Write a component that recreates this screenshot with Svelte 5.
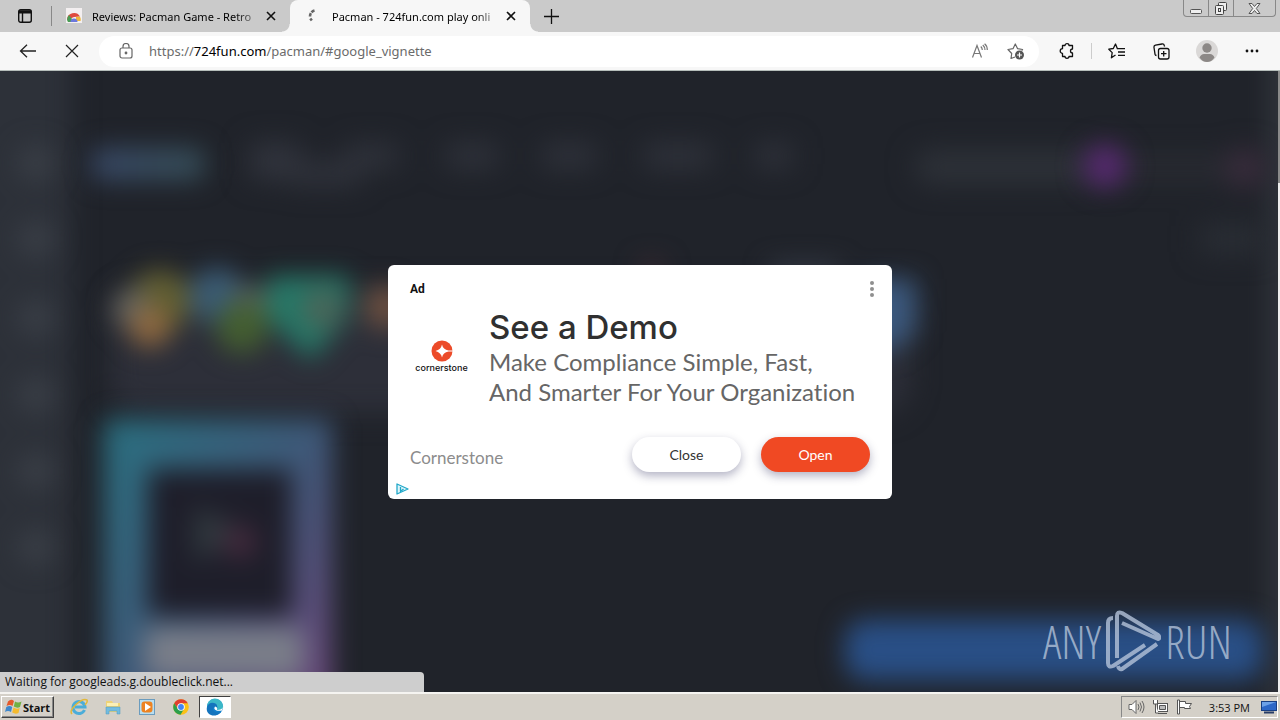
<script>
  let url = 'https://724fun.com/pacman/#google_vignette';
  let address = { scheme: 'https://', host: '724fun.com', path: '/pacman/#google_vignette' };

  const navItems = [
    { x: 250, y: 72, w: 50, h: 36 },
    { x: 290, y: 92, w: 70, h: 22 },
    { x: 346, y: 74, w: 52, h: 22 },
    { x: 446, y: 74, w: 52, h: 22 },
    { x: 542, y: 74, w: 54, h: 22 },
    { x: 644, y: 74, w: 68, h: 22 },
    { x: 756, y: 74, w: 36, h: 22 }
  ];
  const sidebarItems = [92, 168, 247, 324, 400, 476];
</script>

<div class="desktop">
  <header class="tabstrip">
    <button class="tab-menu" aria-label="Tab actions">
      <svg width="16" height="16" viewBox="0 0 16 16" fill="none" stroke="#111" stroke-width="1.4">
        <rect x="1.7" y="1.7" width="12.6" height="12.6" rx="2" />
        <path d="M2 3.2h12M2 4.4h12" stroke-width="2" />
        <path d="M5.5 5v9" />
      </svg>
    </button>
    <div class="tab">
      <svg class="favicon" width="16" height="16" viewBox="0 0 16 16">
        <path d="M0 0h16v15H0z" fill="#f3eff0" />
        <path d="M1 12a7 7 0 0 1 13-3.500L8 9z" fill="#df4b3e" />
        <path d="M1 12a7 7 0 0 1 2-5l3 4-1 3H2z" fill="#4a9c54" />
        <path d="M14 8.500a7 7 0 0 1 .6 4.500H10V9z" fill="#efb73b" />
        <path d="M4.500 14a3.500 3.500 0 0 1 7 0z" fill="#6c78dc" />
      </svg>
      <span class="tab-title">Reviews: Pacman Game - Retro</span>
      <button class="tab-close" aria-label="Close tab">
        <svg width="10" height="10" viewBox="0 0 10 10" stroke="#111" stroke-width="1.6"><path d="M1 1l8 8M9 1l-8 8" /></svg>
      </button>
    </div>
    <div class="tab active">
      <svg class="favicon" width="16" height="16" viewBox="0 0 16 16" fill="none" stroke="#666" stroke-width="2.600">
        <path d="M8.500 2.500a6 6 0 0 0-4.500 6" stroke-dasharray="3.500 1" />
        <path d="M4.300 10.500l1.500 2" />
      </svg>
      <span class="tab-title">Pacman - 724fun.com play onli</span>
      <button class="tab-close" aria-label="Close tab">
        <svg width="10" height="10" viewBox="0 0 10 10" stroke="#111" stroke-width="1.6"><path d="M1 1l8 8M9 1l-8 8" /></svg>
      </button>
    </div>
    <button class="new-tab" aria-label="New tab">
      <svg width="15" height="15" viewBox="0 0 15 15" stroke="#111" stroke-width="1.300"><path d="M7.500 0v15M0 7.500h15" /></svg>
    </button>
    <div class="window-controls">
      <button class="win" aria-label="Minimize">
        <svg width="12" height="13" viewBox="0 0 12 13"><rect x=".5" y="7.500" width="11" height="4" rx="1" fill="#eee" stroke="#555" /></svg>
      </button>
      <button class="win" aria-label="Restore">
        <svg width="14" height="13" viewBox="0 0 14 13" fill="#eee" stroke="#444">
          <rect x="4.500" y=".5" width="8" height="8" rx="1" />
          <rect x="1.500" y="3.500" width="8" height="9" rx="1" />
          <rect x="4.500" y="6.500" width="2" height="3" />
        </svg>
      </button>
      <button class="win wide" aria-label="Close window">
        <svg width="13" height="11" viewBox="0 0 13 11">
          <path d="M1 .5h3l2.500 3 2.500-3h3L8.300 5.500l3.700 5H9L6.500 7.500 4 10.500H1l3.700-5z" fill="#eee" stroke="#555" />
        </svg>
      </button>
    </div>
  </header>

  <nav class="toolbar">
    <button class="tool" aria-label="Back">
      <svg width="18" height="14" viewBox="0 0 18 14" fill="none" stroke="#222" stroke-width="1.300"><path d="M17 7H1.500M8 .8L1.500 7 8 13.200" /></svg>
    </button>
    <button class="tool" aria-label="Stop loading">
      <svg width="14" height="14" viewBox="0 0 14 14" stroke="#222" stroke-width="1.200"><path d="M1 1l12 12M13 1L1 13" /></svg>
    </button>
    <div class="omnibox">
      <svg class="lock" width="14" height="16" viewBox="0 0 14 16" fill="none" stroke="#666" stroke-width="1.200">
        <rect x="1" y="5" width="12" height="10" rx="2" />
        <path d="M4 5V3.500a3 3 0 0 1 6 0V5" />
        <circle cx="7" cy="10" r=".8" fill="#555" />
      </svg>
      <a class="address" href={url}>{address.scheme}<b>{address.host}</b>{address.path}</a>
      <button class="inner" aria-label="Read aloud">
        <svg width="18" height="16" viewBox="0 0 18 16" fill="none" stroke="#777" stroke-width="1.200">
          <path d="M1.500 14.500L6 2.500l4.500 12M3 10.500h6" />
          <path d="M9.800 3.500q1.500 1.500 1.500 3.500M11.800 2q2.200 2 2.200 5M13.600.800Q16.300 3 16.300 7" />
        </svg>
      </button>
      <button class="inner" aria-label="Add to favorites">
        <svg width="18" height="18" viewBox="0 0 18 18" fill="none" stroke="#666" stroke-width="1.200">
          <path d="M8 15l-4 1.500.7-5L1 7.500l5-.8L8.300 2l2.300 4.700 5 .8-1 1" stroke-linejoin="round" />
          <circle cx="12.500" cy="13" r="4.500" fill="#555" stroke="none" />
          <path d="M12.500 10.500v5M10 13h5" stroke="#fff" />
        </svg>
      </button>
    </div>
    <div class="extras">
      <button class="tool" aria-label="Extensions">
        <svg width="16" height="16" viewBox="0 0 16 16" fill="none" stroke="#111" stroke-width="1.300" stroke-linejoin="round">
          <path d="M3.500 2.500H6a2 1.800 0 0 1 4 0h3.500V6a1.500 1.500 0 0 0 0 4v3.500H10a2 1.800 0 0 1-4 0H3.500V10.300a2.300 2.300 0 0 1 0-4.600z" />
        </svg>
      </button>
      <span class="divider"></span>
      <button class="tool" aria-label="Favorites">
        <svg width="18" height="16" viewBox="0 0 18 16" fill="none" stroke="#111" stroke-width="1.300" stroke-linejoin="round">
          <path d="M9.500 6L7.500 1 5.300 5.500.8 6.200l3.400 3.400-.8 5.200L7.500 12" />
          <path d="M9 5.700h8M10 9h7M10 12.300h7" />
        </svg>
      </button>
      <button class="tool" aria-label="Collections">
        <svg width="17" height="17" viewBox="0 0 17 17" fill="none" stroke="#111" stroke-width="1.300">
          <rect x="5.500" y="5.500" width="10.500" height="10.500" rx="2" />
          <path d="M3.500 12.500a2 2 0 0 1-1.500-1.300L1 4.500a2 2 0 0 1 1.500-2.300L9 1a2 2 0 0 1 2.300 1.500l.3 1M10.700 8v5.500M8 10.700h5.500" />
        </svg>
      </button>
      <button class="tool" aria-label="Profile">
        <svg width="22" height="22" viewBox="0 0 22 22">
          <circle cx="11" cy="11" r="11" fill="#dad8d7" />
          <circle cx="11" cy="8" r="4.700" fill="#8c8886" />
          <path d="M3.500 17.500Q5 14 8 14h6q3 0 4.500 3.500Q15.500 22 11 22t-7.500-4.500z" fill="#8c8886" />
        </svg>
      </button>
      <button class="tool" aria-label="Settings and more">
        <svg width="14" height="4" viewBox="0 0 14 4" fill="#111"><circle cx="2" cy="2" r="1.400" /><circle cx="7" cy="2" r="1.400" /><circle cx="12" cy="2" r="1.400" /></svg>
      </button>
    </div>
  </nav>

  <main class="page">
    <svg class="backdrop" viewBox="0 0 1280 621" preserveAspectRatio="xMinYMin slice" aria-hidden="true">
      <defs>
        <filter id="soft" x="-50%" y="-50%" width="200%" height="200%" color-interpolation-filters="sRGB"><feGaussianBlur stdDeviation="14" /></filter>
        <filter id="edge" x="-50%" y="-50%" width="200%" height="200%" color-interpolation-filters="sRGB"><feGaussianBlur stdDeviation="13" /></filter>
        <linearGradient id="frame" x1="0" y1="0" x2="1" y2="1">
          <stop offset="0" stop-color="#297080" />
          <stop offset=".5" stop-color="#3f5878" />
          <stop offset="1" stop-color="#70457a" />
        </linearGradient>
        <linearGradient id="logo"><stop offset="0" stop-color="#384866" /><stop offset="1" stop-color="#364e58" /></linearGradient>
      </defs>
      <rect width="1280" height="621" fill="#20232a" />
      <rect x="-30" y="-30" width="102" height="690" fill="#2d3139" filter="url(#edge)" />
      <rect x="1268" y="-30" width="40" height="690" fill="#30343b" filter="url(#edge)" />
      <g filter="url(#soft)">
        {#each sidebarItems as y}
          <circle cx="36" cy={y} r="16" fill="#3e434b" />
        {/each}
        {#each navItems as item}
          <rect x={item.x} y={item.y} width={item.w} height={item.h} fill="#31343d" />
        {/each}
        <rect x="915" y="80" width="180" height="32" rx="14" fill="#2e3239" />
        <rect x="1095" y="86" width="150" height="22" fill="#2a2c33" />
        <circle cx="1246" cy="97" r="19" fill="#3c2d3e" />
        <rect x="1200" y="154" width="64" height="28" fill="#2a2e35" />
        <rect x="110" y="218" width="800" height="124" rx="30" fill="#2d2f39" />
      </g>
      <g filter="url(#edge)">
        <rect x="92" y="77" width="112" height="32" rx="8" fill="url(#logo)" />
        <circle cx="1105" cy="95" r="22" fill="#56296f" />
        <circle cx="160" cy="230" r="31" fill="#615e30" />
        <circle cx="133" cy="238" r="20" fill="#65655e" />
        <circle cx="150" cy="256" r="20" fill="#926a40" />
        <circle cx="217" cy="225" r="28" fill="#3a5b74" />
        <circle cx="250" cy="235" r="20" fill="#58655a" />
        <circle cx="242" cy="256" r="26" fill="#445f30" />
        <path d="M267 205h82v40l-38 44-42-40z" fill="#257867" />
        <circle cx="322" cy="238" r="20" fill="#4c6458" />
        <circle cx="386" cy="236" r="22" fill="#6d5040" />
        <rect x="640" y="192" width="24" height="10" fill="#4d3035" />
        <rect x="770" y="194" width="70" height="14" fill="#3c424e" />
        <path d="M862 208h54v52l-24 20h-30z" fill="#3b597e" />
      </g>
      <g filter="url(#edge)">
        <rect x="104" y="348" width="228" height="304" rx="8" fill="url(#frame)" />
        <rect x="148" y="398" width="144" height="147" rx="4" fill="#1e1e2a" />
        <path d="M194 435l55 25-55 32z" fill="#30383e" />
        <circle cx="240" cy="471" r="17" fill="#43293c" />
        <rect x="145" y="557" width="158" height="50" rx="8" fill="#7a7e89" />
      </g>
      <rect x="845" y="549" width="418" height="60" rx="20" fill="#294f86" filter="url(#edge)" />
    </svg>

    <section class="ad" aria-label="Advertisement">
      <div class="ad-head">
        <strong>Ad</strong>
        <button class="more" aria-label="Ad options">
          <svg width="4" height="16" viewBox="0 0 4 16" fill="#8f8f8f"><circle cx="2" cy="2" r="2" /><circle cx="2" cy="8" r="2" /><circle cx="2" cy="14" r="2" /></svg>
        </button>
      </div>
      <div class="ad-body">
        <div class="brand">
          <svg width="22" height="22" viewBox="0 0 22 22">
            <circle cx="11" cy="11" r="10.500" fill="#ec4b29" />
            <path d="M11 4.500q1 5 6.500 6H22v1h-4.500q-5.500 1-6.500 6-1-5-6.500-6.500 5.500-1.500 6.500-6.500z" fill="#fff" />
          </svg>
          <span>cornerstone</span>
        </div>
        <div class="copy">
          <h1>See a Demo</h1>
          <p>Make Compliance Simple, Fast,<br />And Smarter For Your Organization</p>
        </div>
      </div>
      <div class="ad-foot">
        <span class="advertiser">Cornerstone</span>
        <button class="pill">Close</button>
        <button class="pill open">Open</button>
      </div>
      <a class="adchoices" href="#adchoices" aria-label="AdChoices">
        <svg width="13" height="12" viewBox="0 0 13 12" fill="none" stroke="#21a8c9" stroke-width="1.300" stroke-linejoin="round">
          <path d="M1 1l11 5L1 11z" fill="#dff5fa" />
          <path d="M4.500 4v4.500l3-2.500" />
        </svg>
      </a>
    </section>

    <div class="watermark">
      <span>ANY</span>
      <svg width="56" height="62" viewBox="0 0 56 62" fill="none" stroke="currentColor" stroke-width="4" stroke-linejoin="round">
        <path d="M8 8Q3 8 3 13v40q0 5 5 3l32-21" />
        <path d="M12 48V6q0-5 5-3l36 22q3 3 0 4L17 13" />
        <path d="M52 34L17 59q-3 1-4-3" />
      </svg>
      <span>RUN</span>
    </div>

    <div class="status">Waiting for googleads.g.doubleclick.net...</div>
    <div class="scroll"><div class="thumb"></div></div>
  </main>

  <footer class="taskbar">
    <button class="start">
      <svg width="17" height="16" viewBox="0 0 17 16">
        <path d="M3 2.500Q6-.5 9 2L7.500 7Q5 5 1.500 7z" fill="#e4592b" />
        <path d="M10 2.500q3 2 6.500 0L15 8q-3 1.500-6.200-.5z" fill="#71b043" />
        <path d="M1.300 8Q4.500 6.200 7.200 8L6 13q-3-2-6 0z" fill="#3d87cc" />
        <path d="M8.500 8.500q3 2 6.200.5L13.500 14q-3 1.500-6.300-.5z" fill="#f5bb2f" />
      </svg>
      Start
    </button>
    <button class="launch" aria-label="Internet Explorer">
      <svg width="18" height="18" viewBox="0 0 18 18" fill="none">
        <path d="M14.500 12a6 6 0 1 1 .5-3H5" stroke="#4badd9" stroke-width="3" />
        <path d="M2 16Q-1 13 6 6.500T17 2q1 2-2 5" stroke="#e2b83a" stroke-width="1.500" />
      </svg>
    </button>
    <button class="launch" aria-label="Windows Explorer">
      <svg width="18" height="18" viewBox="0 0 18 18">
        <path d="M2 3h6l1 2h7v9H2z" fill="#eed377" />
        <path d="M3 5h11v3H3z" fill="#fbf0b5" />
        <path d="M2 9h14v7h-3v-3H5v3H2z" fill="#73bce0" stroke="#4d98bd" stroke-width=".5" />
      </svg>
    </button>
    <button class="launch" aria-label="Media Player">
      <svg width="18" height="18" viewBox="0 0 18 18">
        <rect x="1.500" y="1.500" width="15" height="15" fill="#b9def0" stroke="#6b9cbe" />
        <rect x="3.500" y="3.500" width="11" height="11" rx="3" fill="#ed8322" />
        <path d="M7 5l6 4-6 4z" fill="#fff" />
      </svg>
    </button>
    <button class="launch" aria-label="Chrome">
      <svg width="16" height="16" viewBox="0 0 16 16">
        <circle cx="8" cy="8" r="7.800" fill="#fbc116" />
        <path d="M1.200 4.200A7.800 7.800 0 0 1 14.800 4.200H8L5 10z" fill="#df3f31" />
        <path d="M1.200 4.200A7.800 7.800 0 0 0 7.500 15.800L11 10H5z" fill="#2c9f4b" />
        <circle cx="8" cy="8" r="3.800" fill="#fff" /><circle cx="8" cy="8" r="2.900" fill="#4285f4" />
      </svg>
    </button>
    <button class="launch current" aria-label="Edge">
      <svg width="18" height="18" viewBox="0 0 18 18">
        <circle cx="9" cy="9" r="8" fill="#1280cc" />
        <path d="M1 9a8 8 0 0 1 16-1c1 4-4 5-6 4 1-3 0-6-4-6-3 0-5 1-6 3z" fill="#3bb8c8" />
        <path d="M1 9q2-5 7-4 4 1 3 5-1-2-3-1c-3 2 0 7 7 5-6 7-16 3-14-5z" fill="#1474bd" />
        <path d="M9 8.500c-2 3 1 5 7 4L17 9q-1 3-6 3 1-3-2-3.500z" fill="#fff" />
      </svg>
    </button>
    <div class="tray">
      <button aria-label="Volume">
        <svg width="17" height="16" viewBox="0 0 17 16" fill="none" stroke="#666">
          <path d="M1 5.500h3l4-4v13l-4-4H1z" fill="#fff" />
          <path d="M10 5q2 3 0 6M12 3.500q3 4.500 0 9M14 2q4 6 0 12" />
        </svg>
      </button>
      <button aria-label="Network">
        <svg width="17" height="16" viewBox="0 0 17 16" fill="#fff" stroke="#555">
          <rect x="5.500" y="4.500" width="10" height="8" /><path d="M7.500 6.500h6v4h-6z" fill="#bbb" />
          <path d="M6 14.500h9M1.500 1v4h4V1M3.500 5v9h3" />
        </svg>
      </button>
      <button aria-label="Action Center">
        <svg width="17" height="16" viewBox="0 0 17 16" fill="#fff" stroke="#555"><path d="M1.500 1v14h2V1zM3.500 2.500h6v2h6l-2 3 1 2h-6v-1h-5z" /></svg>
      </button>
      <time>3:53 PM</time>
      <button class="desk" aria-label="Show desktop">
        <svg width="16" height="15" viewBox="0 0 16 15"><rect x=".5" y="1.500" width="15" height="9" fill="#2c67c7" stroke="#183f83" /><path d="M1 2h14L1 7z" fill="#6ca1e8" /><path d="M3 12.500h10" stroke="#263c66" stroke-width="2" /></svg>
      </button>
    </div>
  </footer>
</div>

<style>
  :global(body) {
    margin: 0;
  }

  .desktop {
    display: flex;
    flex-direction: column;
    min-height: 100vh;
    font-family: 'Open Sans', 'Noto Sans', sans-serif;
    font-size: 12px;
    color: #111;
  }

  button {
    display: flex;
    align-items: center;
    justify-content: center;
    flex: none;
    padding: 0;
    border: 0;
    background: none;
    font: inherit;
    color: inherit;
  }

  svg {
    flex: none;
  }

  /* tabs */
  .tabstrip {
    display: flex;
    height: 32px;
    background: #cacaca;
  }

  .tab-menu {
    width: 50px;
  }

  .tab {
    display: flex;
    align-items: center;
    box-sizing: border-box;
    width: 240px;
    padding: 0 8px 0 16px;
    position: relative;
    font-family: 'Noto Sans', sans-serif;
    font-size: 11px;
    color: #000;
  }

  .tab:not(.active)::before {
    content: '';
    position: absolute;
    left: 1px;
    top: 6px;
    height: 20px;
    border-left: 1px solid #888;
  }

  .tab.active {
    background: #f7f7f7;
    border-radius: 8px 8px 0 0;
  }

  .tab.active::before,
  .tab.active::after {
    content: '';
    position: absolute;
    bottom: 0;
    width: 8px;
    height: 8px;
  }

  .tab.active::before {
    right: 100%;
    background: radial-gradient(circle at 0 0, transparent 7px, #f7f7f7 8px);
  }

  .tab.active::after {
    left: 100%;
    background: radial-gradient(circle at 100% 0, transparent 7px, #f7f7f7 8px);
  }

  .favicon {
    margin-right: 10px;
  }

  .tab-title {
    flex: 1;
    white-space: nowrap;
    mask-image: linear-gradient(to right, #000 85%, rgba(0, 0, 0, 0.2));
  }

  .tab-close {
    width: 22px;
    height: 22px;
  }

  .new-tab {
    width: 42px;
  }

  .window-controls {
    display: flex;
    height: 16px;
    margin: 0 4px 0 auto;
    border: 1px solid #888;
    border-top: 0;
    border-radius: 0 0 4px 4px;
  }

  .win {
    width: 25px;
    border-right: 1px solid #888;
  }

  .win.wide {
    width: 41px;
    border: 0;
  }

  /* toolbar */
  .toolbar {
    display: flex;
    align-items: center;
    height: 38px;
    padding-left: 6px;
    background: #f7f7f7;
    border-bottom: 1px solid #b5bdba;
  }

  .tool {
    width: 44px;
    height: 32px;
  }

  .omnibox {
    display: flex;
    flex: 1;
    align-items: center;
    height: 31px;
    margin-left: 5px;
    padding: 0 5px 0 20px;
    border-radius: 16px;
    background: #fff;
  }

  .lock {
    margin-right: 16px;
  }

  .address {
    flex: 1;
    font-family: 'Noto Sans', sans-serif;
    font-size: 13px;
    color: #6b6b6b;
    text-decoration: none;
  }

  .address b {
    font-weight: 400;
    color: #000;
  }

  .inner {
    width: 36px;
    height: 28px;
  }

  .extras {
    display: flex;
    align-items: center;
    padding-left: 5px;
    padding-right: 6px;
  }

  .divider {
    height: 16px;
    margin: 0 2px;
    border-left: 1px solid #ccc;
  }

  .extras .tool {
    width: 45px;
  }

  /* page */
  .page {
    position: relative;
    display: flex;
    flex: 1;
    align-items: center;
    justify-content: center;
    overflow: hidden;
    background: #20232a;
  }

  .backdrop {
    position: absolute;
    inset: 0;
    width: 100%;
    height: 100%;
  }

  .ad {
    position: relative;
    box-sizing: border-box;
    width: 504px;
    max-width: 100%;
    padding: 14px 22px 27px;
    border-radius: 6px;
    background: #fff;
    font-family: Lato, 'Open Sans', sans-serif;
    font-variant-ligatures: none;
  }

  .ad-head {
    display: flex;
    align-items: center;
    justify-content: space-between;
    height: 21px;
    font-family: Roboto, sans-serif;
    font-size: 12px;
  }

  .more {
    margin-right: -8px;
    width: 12px;
  }

  .ad-body {
    display: flex;
    gap: 16px;
    margin-top: 8px;
  }

  .brand {
    display: flex;
    flex-direction: column;
    align-items: center;
    justify-content: center;
    width: 63px;
    padding-bottom: 2px;
    font-family: Inter, sans-serif;
    font-size: 9px;
    font-weight: 500;
    line-height: 11px;
  }

  h1 {
    margin: 0 0 1px;
    font-family: Inter, sans-serif;
    font-size: 33px;
    font-weight: 500;
    line-height: 38px;
    color: #303030;
  }

  p {
    margin: 0;
    font-size: 24px;
    line-height: 30px;
    color: #666;
    white-space: nowrap;
  }

  .ad-foot {
    display: flex;
    align-items: center;
    margin-top: 30px;
  }

  .advertiser {
    flex: 1;
    padding-top: 6px;
    font-size: 17px;
    color: #8c8c8c;
  }

  .pill {
    width: 109px;
    height: 35px;
    margin-left: 20px;
    border-radius: 18px;
    background: #fff;
    box-shadow: 0 4px 10px rgba(40, 40, 90, 0.35);
    font-size: 14px;
    color: #333;
  }

  .pill.open {
    background: #f04923;
    color: #fff;
  }

  .adchoices {
    position: absolute;
    left: 8px;
    bottom: 4px;
    line-height: 0;
  }

  .watermark {
    position: absolute;
    right: 48px;
    bottom: 20px;
    display: flex;
    align-items: center;
    gap: 4px;
    font-family: 'Open Sans Condensed Light', 'Open Sans Condensed', 'Open Sans', sans-serif;
    font-size: 46px;
    font-weight: 300;
    line-height: 62px;
    color: rgba(180, 195, 217, 0.8);
  }

  .status {
    position: absolute;
    left: 0;
    bottom: 0;
    box-sizing: border-box;
    width: 424px;
    height: 20px;
    padding-left: 5px;
    border-top-right-radius: 4px;
    background: #cecece;
    line-height: 20px;
  }

  .scroll {
    position: absolute;
    inset: 0 0 0 auto;
    width: 2px;
    background: #eee;
  }

  .thumb {
    height: 18%;
    background: #8a8a8a;
  }

  /* taskbar */
  .taskbar {
    display: flex;
    align-items: center;
    gap: 2px;
    height: 26px;
    padding: 0 2px 0 1px;
    border-top: 2px solid #f5f4f1;
    background: #d4d0c8;
  }

  .start {
    gap: 1px;
    width: 53px;
    height: 22px;
    margin-right: 7px;
    border: 1px solid;
    border-color: #fff #404040 #404040 #fff;
    box-shadow: inset -1px -1px #888;
    box-sizing: border-box;
    font-size: 11px;
    font-weight: 700;
  }

  .launch {
    width: 32px;
    height: 22px;
    box-sizing: border-box;
  }

  .launch.current {
    border: 1px solid;
    border-color: #404040 #fff #fff #404040;
    background: #fff;
  }

  .tray {
    display: flex;
    align-items: center;
    gap: 7px;
    height: 22px;
    margin-left: auto;
    padding-left: 6px;
    box-sizing: border-box;
    border: 1px solid;
    border-color: #888 #fff #fff #888;
  }

  time {
    margin-left: 9px;
    margin-right: 4px;
    font-size: 11px;
    white-space: nowrap;
  }
</style>
